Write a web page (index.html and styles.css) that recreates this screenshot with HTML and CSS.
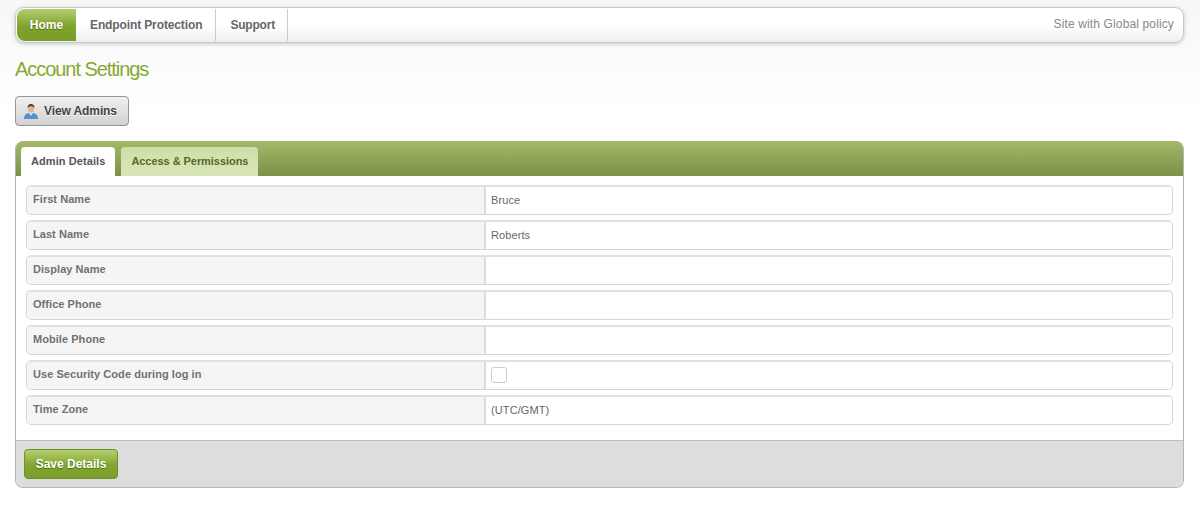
FILE: index.html
```html
<!DOCTYPE html>
<html lang="en">
<head>
    <meta charset="UTF-8">
    <meta name="viewport" content="width=device-width, initial-scale=1.0">
    <title>Account Settings</title>
    <link rel="stylesheet" href="styles.css">
</head>
<body>
    <div class="navbar">
        <a class="nav-item active">Home</a>
        <a class="nav-item">Endpoint Protection</a>
        <a class="nav-item nav-support">Support</a>
        <span class="nav-info">Site with Global policy</span>
    </div>

    <h1 class="page-title">Account Settings</h1>

    <button class="btn-admins">
        <svg class="icon-admin" width="16" height="17" viewBox="0 0 16 17">
            <path d="M1 16c0-3 1-5 4.5-6L8 11l2.5-1c3.500 1 4.500 3 4.500 6z" fill="#4f93cf"/>
            <path d="M6 10l2 3 2-3-2 1z" fill="#e8eef4"/>
            <ellipse cx="8" cy="5.500" rx="3.200" ry="4" fill="#e3b48e"/>
            <path d="M4.600 5C4.400 2 6 1 8 1s3.600 1 3.400 4C10.500 3.800 9.500 3.300 8 3.300S5.500 3.800 4.600 5z" fill="#4a3a30"/>
        </svg>
        View Admins
    </button>

    <div class="panel">
        <div class="tabs">
            <a class="tab active">Admin Details</a>
            <a class="tab">Access &amp; Permissions</a>
        </div>
        <div class="panel-body">
            <div class="row">
                <div class="row-label">First Name</div>
                <div class="row-value">Bruce</div>
            </div>
            <div class="row">
                <div class="row-label">Last Name</div>
                <div class="row-value">Roberts</div>
            </div>
            <div class="row">
                <div class="row-label">Display Name</div>
                <div class="row-value"></div>
            </div>
            <div class="row">
                <div class="row-label">Office Phone</div>
                <div class="row-value"></div>
            </div>
            <div class="row">
                <div class="row-label">Mobile Phone</div>
                <div class="row-value"></div>
            </div>
            <div class="row">
                <div class="row-label">Use Security Code during log in</div>
                <div class="row-value"><span class="checkbox"></span></div>
            </div>
            <div class="row">
                <div class="row-label">Time Zone</div>
                <div class="row-value">(UTC/GMT)</div>
            </div>
        </div>
        <div class="panel-footer">
            <button class="btn-save">Save Details</button>
        </div>
    </div>
</body>
</html>
```

FILE: styles.css
```css
body {
    margin: 0;
    padding: 7px 16px 0 15px;
    height: 511px;
    overflow: hidden;
    font-family: "Liberation Sans", Arial, sans-serif;
    font-size: 12px;
    color: #666;
    background: linear-gradient(#f7f7f7, #ffffff 110px);
}

.navbar {
    display: flex;
    align-items: stretch;
    padding: 1px;
    border: 1px solid #c8c8c8;
    border-radius: 9px;
    height: 32px;
    background: linear-gradient(#ffffff, #ffffff 50%, #eeeeee);
    box-shadow: 0 1px 4px rgba(0, 0, 0, 0.2);
}

.nav-item {
    display: flex;
    align-items: center;
    padding: 0 13px 0 14px;
    font-weight: bold;
    letter-spacing: -0.12px;
    color: #666;
    border-right: 1px solid #ccc;
}

.nav-item.nav-support {
    padding-right: 12px;
    letter-spacing: -0.2px;
}

.nav-item.active {
    width: 59px;
    padding: 0;
    justify-content: center;
    color: #fff;
    letter-spacing: 0;
    border-right: none;
    border-radius: 8px 0 0 8px;
    background: linear-gradient(#b2cf6e, #7fa22e 55%, #7b9e2b);
    text-shadow: 0 1px 1px #4d6a10;
}

.nav-info {
    margin-left: auto;
    padding-right: 8px;
    line-height: 31px;
    letter-spacing: 0.13px;
    color: #888;
}

.page-title {
    margin: 14px 0 0 0;
    height: 25px;
    font-size: 20px;
    line-height: 25px;
    font-weight: normal;
    letter-spacing: -1.05px;
    color: #86a92f;
}

.btn-admins {
    display: flex;
    align-items: center;
    gap: 5px;
    margin-top: 14px;
    width: 114px;
    height: 30px;
    padding: 0 0 0 7px;
    font-family: inherit;
    font-size: 12px;
    font-weight: bold;
    letter-spacing: -0.1px;
    color: #444;
    border: 1px solid #959595;
    border-radius: 4px;
    background: linear-gradient(#f0f0f0, #d2d2d2);
    text-shadow: 0 1px 0 #fff;
}

.panel {
    margin-top: 15px;
    border: 1px solid #b5b5b5;
    border-top: none;
    border-radius: 8px;
    background: #fff;
    overflow: hidden;
    height: 346px;
    display: flex;
    flex-direction: column;
}

.tabs {
    display: flex;
    gap: 6px;
    height: 29px;
    padding: 6px 0 0 5px;
    background: linear-gradient(#a3b96b, #7a9146);
    flex-shrink: 0;
}

.tab {
    padding: 0 10px;
    font-size: 11px;
    font-weight: bold;
    line-height: 28px;
    letter-spacing: -0.05px;
    color: #56682a;
    border-radius: 4px 4px 0 0;
    background: linear-gradient(#cfdfa8, #d9e6b8);
}

.tab.active {
    letter-spacing: 0.08px;
    color: #555;
    background: #fff;
}

.panel-body {
    flex: 1;
    padding: 9px 10px 10px 10px;
    border-radius: 6px 6px 0 0;
    background: #fff;
}

.row {
    display: flex;
    height: 30px;
    box-sizing: border-box;
    margin-bottom: 5px;
    border: 1px solid #d5d5d5;
    border-top: 2px solid #e0e0e0;
    border-radius: 5px;
    overflow: hidden;
}

.row-label {
    width: 451px;
    padding-left: 6px;
    font-size: 11px;
    font-weight: bold;
    line-height: 24px;
    letter-spacing: 0.05px;
    color: #717171;
    background: #f5f5f5;
    border-right: 2px solid #dcdcdc;
}

.row-value {
    flex: 1;
    padding-left: 5px;
    font-size: 11px;
    line-height: 27px;
    letter-spacing: 0.1px;
    color: #666;
    background: #fff;
}

.checkbox {
    display: block;
    width: 14px;
    height: 14px;
    margin-top: 5px;
    border: 1px solid #ccc;
    border-radius: 3px;
}

.panel-footer {
    height: 48px;
    padding: 8px;
    box-sizing: border-box;
    border-top: 1px solid #bdbdbd;
    background: #dddddd;
    flex-shrink: 0;
}

.btn-save {
    display: block;
    width: 94px;
    height: 30px;
    padding: 0;
    font-family: inherit;
    font-size: 12px;
    font-weight: bold;
    color: #fff;
    border: 1px solid #6f8f2a;
    border-radius: 4px;
    background: linear-gradient(#b5d06e, #82a52f 55%, #7d9f2b);
    text-shadow: 0 1px 1px #4d6a10;
}
```
